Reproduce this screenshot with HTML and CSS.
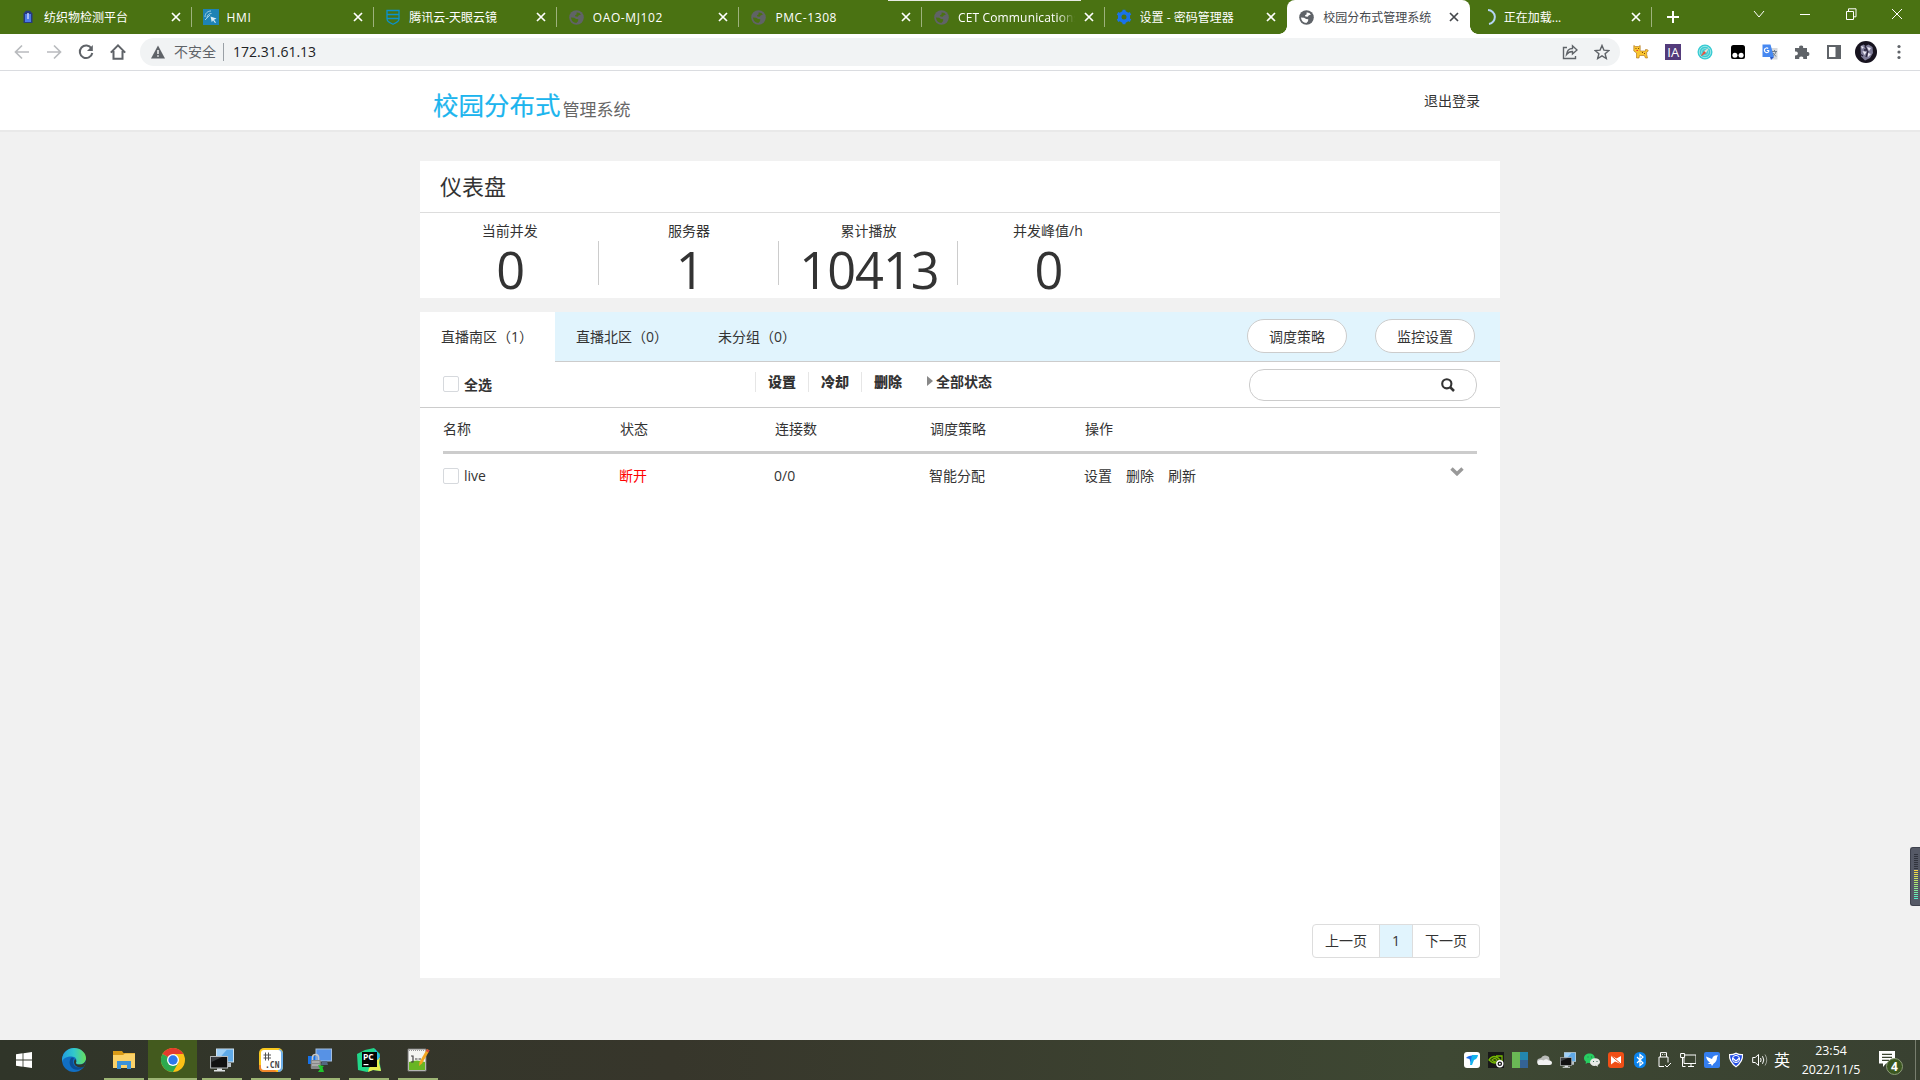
FILE: index.html
```html
<!DOCTYPE html>
<html lang="zh-CN">
<head>
<meta charset="utf-8">
<title>校园分布式管理系统</title>
<link rel="stylesheet" href="styles.css">
</head>
<body>
<svg class="defs" width="0" height="0">
  <symbol id="globe" viewBox="0 0 16 16"><circle cx="8" cy="8" r="7.8" fill="currentColor"/><path d="M8 2.600q3.300-.4 4.700 2.400l-2.200.6-1.200 1.600-2.500-.2-.4-1.500 1.800-1z" fill="var(--cut)"/><path d="M2 8l3.400.2 2.200 1.500 2.300.2-.3 2-1.800 1.900Q3 13.500 2 8z" fill="var(--cut)"/></symbol>
  <symbol id="x" viewBox="0 0 10 10"><path d="M1 1l8 8M9 1 1 9" stroke="currentColor" stroke-width="1.700" fill="none"/></symbol>
  <symbol id="screens" viewBox="0 0 24 24"><rect x="6.500" y="1" width="17" height="13" fill="#5faae8" stroke="#cfe2ef"/><path d="M7 13 17 1.500H7z" fill="#9fd0f7"/><path d="M15 15h6v4h-5z" fill="#b9c2c9"/><rect x=".6" y="8.500" width="17" height="11.500" fill="#111" stroke="#b7bbbd"/><path d="M1.500 14 12 9H1.500z" fill="#3a3d40"/><path d="M7 20.500h5v1.500h3v1.500H4V22h3z" fill="#dde1e3"/></symbol>
</svg>

<header class="tabstrip">
  <div class="tab"><svg class="fav" viewBox="0 0 16 16"><path d="M3.500 4.500 6 1.800h4l2.500 2.700V14h-9z" fill="#263a7c"/><path d="M5 5h6v8H5z" fill="#4a78e8"/><path d="M7.300 4h1.400v6H7.300z" fill="#cfdcff"/></svg><span class="name">纺织物检测平台</span><svg class="close"><use href="#x"/></svg></div>
  <div class="tab"><svg class="fav" viewBox="0 0 16 16"><path fill="#1d83b5" d="M0 0h16v16H0z"/><path d="M7.500 7.500l6 2-2.500 1.200 2 2.800-1 .6-2-2.800-1.200 2z" fill="#d6edf6"/><path d="M2 8c0-4 3-6 6-6M4 9c0-3 2-4.500 4.500-4.500M2 11l5-5" stroke="#9fd0e4" fill="none"/></svg><span class="name latin">HMI</span><svg class="close"><use href="#x"/></svg></div>
  <div class="tab"><svg class="fav" viewBox="0 0 16 16"><path d="M2 1.500h12V10c0 3-3 4-6 5.200C5 14 2 13 2 10zM2 5.500h12M2 9.500h12" fill="none" stroke="#0a92cf" stroke-width="1.300"/></svg><span class="name">腾讯云-天眼云镜</span><svg class="close"><use href="#x"/></svg></div>
  <div class="tab"><svg class="fav globe"><use href="#globe"/></svg><span class="name latin">OAO-MJ102</span><svg class="close"><use href="#x"/></svg></div>
  <div class="tab"><svg class="fav globe"><use href="#globe"/></svg><span class="name latin">PMC-1308</span><svg class="close"><use href="#x"/></svg></div>
  <div class="tab"><svg class="fav globe"><use href="#globe"/></svg><span class="name fade">CET Communications</span><svg class="close"><use href="#x"/></svg></div>
  <div class="tab last"><svg class="fav" viewBox="0 0 16 16"><path d="M8 1.200 14 4.700v6.600L8 14.800 2 11.300V4.700z" fill="#1a73e8"/><path d="M8 .8v14.400M1.500 4.400l13 7.200M14.500 4.400l-13 7.200" stroke="#1a73e8" stroke-width="3"/><circle cx="8" cy="8" r="2.500" fill="#4a7212"/></svg><span class="name">设置 - 密码管理器</span><svg class="close"><use href="#x"/></svg></div>
  <div class="tab active"><svg class="fav globe"><use href="#globe"/></svg><span class="name">校园分布式管理系统</span><svg class="close"><use href="#x"/></svg></div>
  <div class="tab loading"><svg class="fav" viewBox="0 0 16 16"><path d="M8 1a7 7 0 0 1 1 13.900" fill="none" stroke="#b5d5f5" stroke-width="2"/></svg><span class="name">正在加载...</span><svg class="close"><use href="#x"/></svg></div>
  <svg class="plus" viewBox="0 0 14 14"><path d="M7 1v12M1 7h12" stroke="#fff" stroke-width="2"/></svg>
  <div class="window-controls">
    <svg viewBox="0 0 12 12"><path d="M1 3l5 6 5-6"/></svg>
    <svg viewBox="0 0 12 12"><path d="M1 6.500h10"/></svg>
    <svg viewBox="0 0 12 12"><path d="M1.500 3.500h7v8h-7zM3.500 3V.8h7.500v8H9"/></svg>
    <svg viewBox="0 0 12 12"><path d="M1 1l10 10M11 1 1 11"/></svg>
  </div>
  <i class="strip-line"></i>
</header>

<div class="toolbar">
  <svg class="nav off" viewBox="0 0 16 16"><path d="M15 8H2M8 1.500 1.500 8 8 14.500"/></svg>
  <svg class="nav off" viewBox="0 0 16 16"><path d="M1 8h13M8 1.500 14.500 8 8 14.500"/></svg>
  <svg class="nav" viewBox="0 0 16 16"><path d="M13.500 4.500A6.300 6.300 0 1 0 14.300 9"/><path d="M14.800 1v6H9z" fill="#5f6368" stroke="none"/></svg>
  <svg class="nav" viewBox="0 0 16 16"><path d="M3.500 7v7.800h9V7M.8 8.600 8 1.400l7.200 7.200"/></svg>
  <div class="omnibox">
    <svg class="warn" viewBox="0 0 14 14"><path d="M7 .5 14 13.500H0z" fill="#5f6368"/><path d="M6.300 5h1.400v4H6.300zM6.300 10.200h1.400v1.500H6.300z" fill="#fff"/></svg>
    <span class="insecure">不安全</span><span class="url">172.31.61.13</span>
    <svg class="ob share" viewBox="0 0 16 16"><path d="M5 3.500H1.500v11h12V12M4.500 10.500c.5-4 2.500-6 6-6V1.800L15 6l-4.500 4V7.500c-3 0-4.500 1-6 3z"/></svg>
    <svg class="ob" viewBox="0 0 16 16"><path d="M8 1.500l1.900 4.600 5 .4-3.800 3.200 1.200 4.800L8 11.900l-4.300 2.600 1.200-4.800L1.100 6.500l5-.4z"/></svg>
  </div>
  <div class="extensions">
    <svg viewBox="0 0 16 16"><path d="M.8 1.500l1.700 1h3L7.200 1.500V7h5.300V5.500l2 .2.800 1.300-1.600 1v2.500l.8 3.500h-2l-1.200-2.500H6.500L6 14H3.500V9L.8 7z" fill="#fbc62e" stroke="#a96d1a" stroke-width=".6"/><path d="M2.500 4h1v1h-1zM5 4h1v1H5zM9 8h1v1H9zM11 9h1v1h-1z" fill="#7b4713"/><path d="M3.500 6h1.500v1H3.500z" fill="#e33"/></svg>
    <span class="ia">IA</span>
    <svg viewBox="0 0 16 16"><circle cx="8" cy="8" r="7.500" fill="#38cbd3"/><circle cx="8" cy="8" r="5.700" fill="none" stroke="#9ce8e8" stroke-width="1"/><circle cx="8" cy="8" r="3.500" fill="none" stroke="#8fdfe0"/><path d="M12 3.800 9 9 7 7z" fill="#e8ddd2"/><path d="M3.600 12.600 7 7l2 2z" fill="#f0503c"/></svg>
    <svg viewBox="0 0 16 16"><path d="M3.500 1h9q2.500 0 2.500 2.500V13q0 2-2 2H3q-2 0-2-2V3.500Q1 1 3.500 1z" fill="#000"/><circle cx="4.900" cy="11.200" r="2.500" fill="#fff"/><circle cx="11.100" cy="11.200" r="2.500" fill="#fff"/></svg>
    <svg viewBox="0 0 16 16"><path d="M6 4h9.500v11.500H10z" fill="#d7dadd"/><path d="M.5.500h8L12 13H.5z" fill="#4688f1"/><path d="M8 13h4l-3 3z" fill="#2a56c6"/><path d="M7 6.500H4.800M7 6.500a2.300 2.300 0 1 1-.8-2" fill="none" stroke="#fff" stroke-width="1.200"/><path d="M10 7.500h5M12.500 6v1.500M14 7.500c-.5 2.500-2 3.500-3 4M11 9l3 3.500" stroke="#6f7d8f" fill="none"/></svg>
    <svg viewBox="0 0 16 16"><path d="M1 4h4.200a2 2 0 1 1 3.900 0H13v4a2 2 0 1 1 0 3.900V15H9.200a2 2 0 1 0-3.900 0H1v-3.800a2 2 0 1 0 0-3.600z" fill="#5f6368"/></svg>
    <svg viewBox="0 0 16 16"><path d="M1 1h14v14H1zM3 3v10h6.500V3z" fill="#5f6368" fill-rule="evenodd"/></svg>
    <svg class="avatar" viewBox="0 0 22 22"><circle cx="11" cy="11" r="11" fill="#17131f"/><path d="M5.500 5l3-1.500 2 1.500 3-1.500 4 2.500.5 6-3 5-5 2.500-4-4z" fill="#7f7c98"/><path d="M6 5l3 1-2 2zM12 6l4 1-2 3zM7.500 10l4 1-2 3zM13 12l3 1-3 3z" fill="#ece9f4"/><path d="M10 5l2 4-3 0M13 10l-2 6M5 13l3 2" stroke="#29233a" stroke-width="1.300" fill="none"/></svg>
    <svg viewBox="0 0 16 16" fill="#5f6368"><circle cx="8" cy="2.500" r="1.600"/><circle cx="8" cy="8" r="1.600"/><circle cx="8" cy="13.500" r="1.600"/></svg>
  </div>
</div>

<main class="page">
  <div class="site-header"><div class="container head-row">
    <div class="logo"><b>校园分布式</b><span>管理系统</span></div>
    <a class="logout">退出登录</a>
  </div></div>

  <section class="container dashboard">
    <h1>仪表盘</h1>
    <div class="stats">
      <div class="stat"><span>当前并发</span><strong>0</strong></div>
      <div class="stat"><span>服务器</span><strong>1</strong></div>
      <div class="stat"><span>累计播放</span><strong>10413</strong></div>
      <div class="stat"><span>并发峰值/h</span><strong>0</strong></div>
    </div>
  </section>

  <section class="container panel">
    <div class="groups">
      <a class="group current">直播南区（1）</a><a class="group">直播北区（0）</a><a class="group third">未分组（0）</a>
      <div class="buttons"><button>调度策略</button><button>监控设置</button></div>
    </div>
    <div class="filter">
      <label class="all"><i class="box"></i>全选</label>
      <div class="acts"><b>设置</b><b>冷却</b><b>删除</b></div>
      <div class="state"><i></i>全部状态</div>
      <div class="search"><svg viewBox="0 0 14 14"><circle cx="5.800" cy="5.800" r="4.600" fill="none" stroke="#333" stroke-width="2.100"/><path d="M9 9l4 4" stroke="#333" stroke-width="2.500"/></svg></div>
    </div>
    <div class="grid thead"><span>名称</span><span>状态</span><span>连接数</span><span>调度策略</span><span>操作</span></div>
    <div class="grid trow"><span class="cell-name"><i class="box"></i>live</span><span class="down">断开</span><span>0/0</span><span>智能分配</span><span class="ops"><a>设置</a><a>删除</a><a>刷新</a></span><svg class="expand" viewBox="0 0 14 9"><path d="M1.500 1.500 7 6.800l5.500-5.300" fill="none" stroke="#999" stroke-width="3.400"/></svg></div>
    <div class="pager"><a>上一页</a><a class="on">1</a><a>下一页</a></div>
  </section>
</main>

<aside class="meter"><i></i></aside>

<footer class="taskbar">
  <div class="apps">
    <div class="app start"><svg viewBox="0 0 16 16" fill="#fff"><path d="M0 2.300 6.600 1.300v6.300H0zM7.400 1.200 16 0v7.600H7.400zM0 8.400h6.600v6.300L0 13.700zM7.400 8.400H16V16l-8.600-1.200z"/></svg></div>
    <div class="app edge"><svg viewBox="0 0 24 24"><defs><linearGradient id="eg"><stop offset="0" stop-color="#219de0"/><stop offset=".5" stop-color="#32c8cc"/><stop offset="1" stop-color="#67df5c"/></linearGradient></defs><circle cx="12" cy="12" r="12" fill="#116fc3"/><path d="M0 11C1 4 6 0 12 0c7 0 12 5 12 10 0 4-3 6.500-6.500 6.500-2.500 0-4-1-3.500-2 1.500-3-.5-6-4.500-6C5 8.500 1 10 0 14z" fill="url(#eg)"/><path d="M9 10c-4 6 1 13 8 11.500 2-.5 4-1.500 5-3-3 1.500-8 1.500-10-1.500-1.500-2.500-1.500-5 0-6.500-1-1-2-1.500-3-.5z" fill="#0b4d94"/><path d="M14 14.500c-.5 1 1 2 3.500 2 3 0 5.500-1.500 6.300-4.500.4 3-.5 5-2 6.800-3 1.200-7 .7-9-2-1.200-2-1-4 .3-5.800 1.200 1 1.500 2.500.9 3.500z" fill="#30372c"/></svg></div>
    <div class="app run"><svg viewBox="0 0 24 24"><path d="M1 3h9l1.500 2H23v4H1z" fill="#d99b17"/><path d="M1 7h10l2-1.500h10V20H1z" fill="#fbd268"/><path d="M5 21v-8h14v8h-4v-4H9v4z" fill="#3b92d8"/></svg></div>
    <div class="app run chrome"><svg viewBox="0 0 24 24"><circle cx="12" cy="12" r="12" fill="#fbc116"/><path d="M12 12 1.600 6A12 12 0 0 1 22.400 6z" fill="#e33b2e"/><path d="M12 12 1.600 6A12 12 0 0 0 12 24l5.200-9z" fill="#2da94f"/><path d="M12 6h10.400L17 15z" fill="#fbc116"/><circle cx="12" cy="12" r="6" fill="#fff"/><circle cx="12" cy="12" r="4.700" fill="#2d78eb"/></svg></div>
    <div class="app run"><svg><use href="#screens"/></svg></div>
    <div class="app run"><svg viewBox="0 0 24 24"><rect width="24" height="24" rx="5" fill="#f9c920"/><path d="M20 1q4 1 4 5v12q0 6-5 6z" fill="#6baee9"/><path d="M0 17v2q0 5 5 5h13l-6-6z" fill="#f0862b"/><rect x="2" y="2" width="20" height="20" rx="3" fill="#fff"/><path d="M6.500 4.500v8M9.500 4.500v8M4.500 7h7.500M4.500 10h7.500" stroke="#555" stroke-width="1"/><text x="6" y="20" class="cn">.CN</text></svg></div>
    <div class="app run"><svg viewBox="0 0 24 24"><path d="M0 8h10v8H0z" fill="#1672e8"/><rect x="8" y="1" width="15.500" height="12" fill="#5792e5" stroke="#a4bede"/><path d="M14 13h5l1 4h-7z" fill="#54677f"/><path d="M4.500 13V9.500q0-3 3-3t3 3V13" fill="none" stroke="#c8c8c8" stroke-width="1.700"/><rect x="2.800" y="12" width="10" height="9" rx="1" fill="#888"/><path d="M4 14h7.500M4 17h7.500" stroke="#ccc"/><path d="M10 17l6 1-1.500 1.500L16 24h-6l2-3z" fill="#1fc62c"/></svg></div>
    <div class="app run"><svg viewBox="0 0 24 24"><path d="M0 6 8 2l9-2 6 6-1 4 2 13-8-1-6 2-9-2z" fill="#21d789"/><path d="M12 20l11-11-1 6 2 8-8-1-5 2z" fill="#e9f050"/><path d="M18 1l5 7-2 4-4-4z" fill="#27b8ee"/><path fill="#050505" d="M5 4h15v15H5z"/><text x="6" y="12" class="pc">PC</text><path d="M6.500 16h5v1.200h-5z" fill="#fff"/></svg></div>
    <div class="app run"><svg viewBox="0 0 24 24"><path d="M2 1h18v22H2z" fill="#f4f5f1" stroke="#747474"/><path d="M3 14q8-3 16 0v8H3z" fill="#68b524"/><path d="M5 8h2v6H5M9 11h2.500M12.500 11h2.500" stroke="#444" stroke-width="1.200" fill="none"/><path d="M3 2.500h16" stroke="#999" stroke-dasharray="1 1"/><path d="M21 1 23.500 2.500l-7.500 13-3 2.500.5-4z" fill="#f4a622"/><path d="M21 1 23.500 2.500l-1 2-2.600-1.500z" fill="#d64a3d"/></svg></div>
  </div>
  <div class="tray">
    <svg viewBox="0 0 16 16"><rect width="16" height="16" rx="3" fill="#fff"/><path d="M2 6q2-3 8-2.500L7 12l-1.500-5z" fill="#1a6bea"/><path d="M8 3h6q-.5 4-4 5l-2 5H6z" fill="#14b4ee"/></svg>
    <svg viewBox="0 0 16 16"><path fill="#181818" d="M0 0h16v16H0z"/><path d="M1 8q5-7 11 0-5 6-11 0zM4 8q3-3 5 0-2 3-5 0zM8 4h6v6" fill="none" stroke="#76b900" stroke-width="1.300"/><circle cx="11.800" cy="11.800" r="3" fill="#181818" stroke="#fff" stroke-width="1.400"/><circle cx="11.800" cy="11.800" r="1" fill="#fff"/></svg>
    <svg viewBox="0 0 16 16"><path fill="#6ab855" d="M0 0h8v16H0z"/><path fill="#2387ae" d="M8 0h8v8H8z"/><path fill="#346394" d="M8 8h8v8H8z"/></svg>
    <svg viewBox="0 0 16 16"><path d="M2 12a4 4 0 0 1 0-5l3-1a5 5 0 0 1 8-1l1 5z" fill="#b8bab7"/><path d="M2.500 13a3 3 0 0 1 0-4.500q2-1.500 5 0 3-2.500 5 0 3-.5 3.500 2 0 2.500-2.500 2.500z" fill="#f2f2f2"/></svg>
    <svg><use href="#screens"/></svg>
    <svg viewBox="0 0 16 16"><path d="M5.500 1.500c-3 0-5.500 2-5.500 4.700 0 1.500.8 2.700 2 3.500L1.600 12l2.200-1.200c5 1 7-1.600 7-4.600S8.500 1.500 5.500 1.500z" fill="#27ce61"/><path d="M11 6.200c-3 0-5 1.700-5 4s2.500 4.300 6 3.600l2 1-.4-1.700c1.500-.8 2.400-1.700 2.400-3C16 7.800 14 6.200 11 6.200z" fill="#e7e9e6"/><path d="M3.500 4.500h1v1h-1zM7 4.500h1v1H7zM9 9h1v1H9zM12.500 9h1v1h-1z" fill="#365"/></svg>
    <svg viewBox="0 0 16 16"><rect width="16" height="16" rx="3" fill="#f04f16"/><path d="M3 3.500v9l4-3 6 2.500V4L8.500 6.500z" fill="#fff"/><path d="M3 3.500 13 12" stroke="#f04f16"/></svg>
    <svg viewBox="0 0 16 16"><rect x="2" width="12" height="16" rx="5.500" fill="#0a84ef"/><path d="M5 5l6 6-3 2.500v-11L11 5l-6 6" stroke="#fff" fill="none" stroke-width="1.200"/></svg>
    <svg class="line" viewBox="0 0 16 16"><path d="M4.500 5V.6h6V5M3 5h9v5.500M3 5v9.500h5M6 2.500h.8M8.500 2.500h.8M9 13l2 2 4-4"/></svg>
    <svg class="line" viewBox="0 0 16 16"><path d="M4 3h12v8.500H4V6M8 14.500h6M11 11.500v3M.6 1.500h4v4h-4zM2.500 5.500v9h3"/></svg>
    <svg viewBox="0 0 16 16"><rect width="16" height="16" rx="2" fill="#347ef0"/><path d="M2 4.500 8 7q.5-3 3-3.500l3-.3-1 2q0 4-3.500 6.500L8 14l-1-2H3.500L6 10.500Q3 9 2 4.500z" fill="#fff"/></svg>
    <svg viewBox="0 0 16 16"><path d="M8 .5q4 2 7 1.500 1 8-7 13.500Q0 10 1 2q3 .5 7-1.500z" fill="#fff"/><path d="M8 2q3 1.500 6 1.200Q14 9 8 14 2 9 2 3.200 5 3.500 8 2z" fill="#204be3"/><circle cx="8" cy="7" r="3.600" fill="none" stroke="#fff"/><path d="M4.500 6 8 9l3.500-3" stroke="#fff" fill="none" stroke-width="1.300"/></svg>
    <svg class="line" viewBox="0 0 16 16"><path d="M.7 5.500h2.500L6.500 2.500v11L3.200 10.500H.7zM8.500 6q1.200 2 0 4M10.500 4.200q2.600 3.800 0 7.600"/><path d="M13 2.500q3.500 5.500 0 11" opacity=".5"/></svg>
    <span class="ime">英</span>
    <div class="clock"><span>23:54</span><span>2022/11/5</span></div>
    <div class="notice"><svg viewBox="0 0 16 16"><path d="M0 0h16v12.500H7L4 16v-3.500H0z" fill="#fff"/><path d="M3 3.300h10M3 6.300h10M3 9.300h7" stroke="#3d4632" stroke-width="1.200"/></svg><b>4</b></div>
    <i class="peek"></i>
  </div>
</footer>
</body>
</html>
```
FILE: styles.css
```css
* { box-sizing: border-box; }
body {
  margin: 0; width: 1920px; height: 1080px; overflow: hidden;
  display: flex; flex-direction: column; position: relative;
  font-family: "Open Sans", "Noto Sans CJK SC", sans-serif;
  font-size: 14px; color: #333; background: #f1f1f1;
}
svg { display: block; flex: none; }
.defs { position: absolute; }

/* browser tabs */
.tabstrip { height: 34px; flex: none; display: flex; background: #4a7212; position: relative; padding-left: 9px; --cut: #4a7212; }
.tab { width: 182.6px; flex: none; display: flex; align-items: center; padding: 0 9px 0 11px; color: #fff; font-size: 12px; position: relative; }
.tab:not(.active):not(.last)::after { content: ""; position: absolute; right: 0; top: 7px; width: 1px; height: 20px; background: #9eb27d; }
.tab .fav { width: 16px; height: 16px; margin-right: 8px; }
.tab .globe { width: 15px; height: 15px; margin: 0 9px 0 1px; color: #606366; }
.tab .name { flex: 1; white-space: nowrap; overflow: hidden; line-height: 20px; padding-top: 1px; }
.tab .latin { letter-spacing: .6px; }
.tab .fade { letter-spacing: .15px; -webkit-mask-image: linear-gradient(to right, #000 85%, transparent); mask-image: linear-gradient(to right, #000 85%, transparent); }
.tab .close { width: 10px; height: 10px; margin: 0 2px 0 9px; }
.tab.active { background: #fff; color: #45484c; border-radius: 8px 8px 0 0; --cut: #fff; }
.tab.active .globe { color: #5f6368; }
.tab.loading .fav { margin: 0 8px 0 -1px; }
.tab.active::before, .tab.active::after { content: ""; position: absolute; bottom: 0; width: 8px; height: 8px; }
.tab.active::before { left: -8px; background: radial-gradient(circle at 0 0, transparent 7.5px, #fff 8px); }
.tab.active::after { right: -8px; background: radial-gradient(circle at 100% 0, transparent 7.5px, #fff 8px); }
.plus { width: 14px; height: 14px; margin: 10px 0 0 14px; }
.window-controls { margin-left: auto; display: flex; gap: 34px; padding: 8px 17px 0 0; }
.window-controls svg { width: 12px; height: 12px; fill: none; stroke: #fff; stroke-width: 1; }
.strip-line { position: absolute; left: 888px; top: 0; width: 193px; height: 1px; background: #e8eae4; }

/* address bar */
.toolbar { height: 37px; flex: none; display: flex; align-items: center; background: #fff; border-bottom: 1px solid #dadce0; padding: 0 13px 0 14px; }
.nav { width: 16px; height: 16px; margin-right: 16px; fill: none; stroke: #5f6368; stroke-width: 2; }
.nav.off { stroke: #b9bbbe; stroke-width: 1.7; }
.omnibox { width: 1480px; height: 28px; margin-left: -2px; border-radius: 14px; background: #f1f3f4; display: flex; align-items: center; padding: 0 10px 0 11px; }
.warn { width: 14px; height: 14px; }
.insecure { color: #5f6368; margin-left: 9px; padding-right: 7px; line-height: 18px; border-right: 1px solid #9aa0a6; }
.url { color: #202124; margin-left: 9px; flex: 1; margin-top: -1px; }
.ob { width: 16px; height: 16px; margin-left: 16px; fill: none; stroke: #5f6368; stroke-width: 1.4; }
.extensions { display: flex; align-items: center; margin-left: 13px; gap: 16.2px; }
.extensions svg { width: 16px; height: 16px; }
.extensions .avatar { width: 22px; height: 22px; margin: 0 -3px; }
.ia { width: 16px; height: 16px; background: #533b7b; color: #fff; font: 13px/16px "Open Sans", sans-serif; text-align: center; }

/* page */
.page { height: 969px; flex: none; }
.container { width: 1080px; margin: 0 auto; background: #fff; }
.site-header { height: 61px; background: #fff; border-bottom: 2px solid #e9e9e9; }
.head-row { height: 59px; display: flex; justify-content: space-between; align-items: flex-start; padding: 0 20px 0 13px; }
.logo { display: flex; align-items: flex-end; height: 52px; color: #666; font-size: 17px; }
.logo b { font-size: 25.5px; font-weight: 400; color: #1cb5ee; line-height: 35px; -webkit-text-stroke: .2px #1cb5ee; }
.logo span { line-height: 27px; margin-left: 2px; }
.logout { line-height: 60px; height: 59px; color: #333; }
.dashboard { margin-top: 29px; height: 137px; }
.dashboard h1 { margin: 0; padding-left: 20px; height: 52px; line-height: 51px; font-size: 22px; font-weight: 400; border-bottom: 1px solid #ddd; }
.stats { display: flex; height: 85px; }
.stat { width: 179.4px; display: flex; flex-direction: column; align-items: center; padding-top: 8px; position: relative; line-height: 20px; }
.stat + .stat::before { content: ""; position: absolute; left: -1px; top: 28px; width: 1px; height: 44px; background: #ccc; }
.stat strong { font-size: 50.5px; line-height: 58px; font-weight: 400; letter-spacing: -1px; margin-right: -1px; }

.panel { margin-top: 14px; height: 666px; }
.groups { display: flex; height: 50px; background: #e1f4fd; }
.group { line-height: 49px; padding-left: 21px; width: 142px; border-bottom: 1px solid #ccc; white-space: nowrap; }
.group.current { width: 135px; background: #fff; border-color: #fff; }
.buttons { flex: 1; display: flex; justify-content: flex-end; gap: 28px; padding: 7px 25px 0 0; border-bottom: 1px solid #ccc; }
.buttons button { width: 100px; height: 34px; border: 1px solid #ccc; border-radius: 17px; background: #fff; color: #333; font: inherit; padding: 0; }
.filter { height: 46px; display: flex; border-bottom: 1px solid #ccc; padding: 0 23px; font-weight: 700; color: #333; }
.box { display: inline-block; width: 16px; height: 16px; border: 1px solid #d6d9dd; border-radius: 2px; background: #fff; margin-right: 5px; flex: none; }
.all { display: flex; width: 312px; height: 20px; line-height: 18px; margin-top: 14px; }
.acts { display: flex; margin-top: 10px; height: 20px; line-height: 19px; }
.acts b { width: 53px; padding-left: 12px; border-left: 1px solid #e6e6e6; }
.state { display: flex; align-items: center; margin: 9px 0 0 13px; height: 20px; line-height: 19px; }
.state i { border: 5px solid transparent; border-left: 6px solid #888; border-right: 0; margin-right: 3px; }
.search { margin: 7px 0 0 auto; width: 228px; height: 32px; border: 1px solid #ccc; border-radius: 15px; padding: 8px 0 0 191px; }
.search svg { width: 14px; height: 14px; }
.grid { margin: 0 23px; display: grid; grid-template-columns: 177px 155px 155px 155px 1fr 27px; }
.thead { height: 46px; line-height: 42px; border-bottom: 3px solid #ccc; }
.trow { height: 44px; line-height: 44px; grid-template-columns: 176px 155px 155px 155px 1fr 27px; }
.cell-name { display: flex; }
.cell-name .box { margin-top: 14px; }
.down { color: #f00; }
.ops { display: flex; gap: 14px; }
.expand { width: 14px; height: 9px; margin-top: 13px; }
.pager { display: flex; width: 168px; height: 34px; margin: 426px 20px 0 auto; border: 1px solid #ddd; border-radius: 4px; line-height: 32px; text-align: center; overflow: hidden; }
.pager a { flex: 1; }
.pager .on { flex: 0 0 34px; border: solid #ddd; border-width: 0 1px; background: #e1f4fd; }

/* desktop meter docked over the page edge */
.meter { position: absolute; right: 0; top: 847px; width: 10px; height: 59px; background: #555966; border: 1px solid #3e414d; border-right: 0; border-radius: 3px 0 0 3px; padding: 6px 2px 0 3px; }
.meter i { display: block; height: 46px; background: repeating-linear-gradient(to bottom, transparent 0 1px, #555966 1px 2px), linear-gradient(#30333d 0 35%, #ffd740 35%, #b7e868 60%, #48efcf); }

/* taskbar */
.taskbar { height: 40px; flex: none; display: flex; justify-content: space-between; background: linear-gradient(90deg, #303529, #37362b 35%, #3e4833 75%, #394131); }
.apps { display: flex; }
.app { width: 49px; display: flex; justify-content: center; align-items: center; position: relative; }
.app svg { width: 24px; height: 24px; }
.app.start { width: 48px; }
.start svg { width: 16px; height: 16px; }
.edge { width: 52px; }
.edge + .app { width: 48px; }
.edge + .app svg { margin-right: 1px; }
.app.run::after { content: ""; position: absolute; left: 5px; right: 4px; bottom: 0; height: 2px; background: #9db574; }
.app.chrome { background: #435a1e; }
.app.chrome::after, .edge + .app.run::after { left: 0; right: 0; }
.edge + .app.run::after { left: 4px; right: 4px; }
.cn { font: 700 8px "DejaVu Sans Mono", monospace; fill: #444; }
.pc { font: 700 8.5px "Open Sans", sans-serif; fill: #fff; }
.tray { display: flex; align-items: center; color: #fff; }
.tray > svg { width: 16px; height: 16px; margin-right: 8px; }
.tray .line { fill: none; stroke: #fff; stroke-width: 1; }
.ime { font-size: 16px; width: 16px; margin-left: -2px; line-height: 20px; }
.clock { width: 82px; font-size: 12.4px; line-height: 19px; display: flex; flex-direction: column; align-items: center; }
.notice { position: relative; width: 43px; padding-left: 7px; }
.notice svg { width: 16px; height: 16px; margin-top: -2px; }
.notice b { position: absolute; left: 14px; top: 5px; width: 17px; height: 17px; border: 1px solid #8c9b78; border-radius: 50%; background: #3b5720; font-size: 12px; line-height: 15px; text-align: center; }
.peek { width: 1px; height: 40px; background: #787e6e; margin-right: 4px; }
```
